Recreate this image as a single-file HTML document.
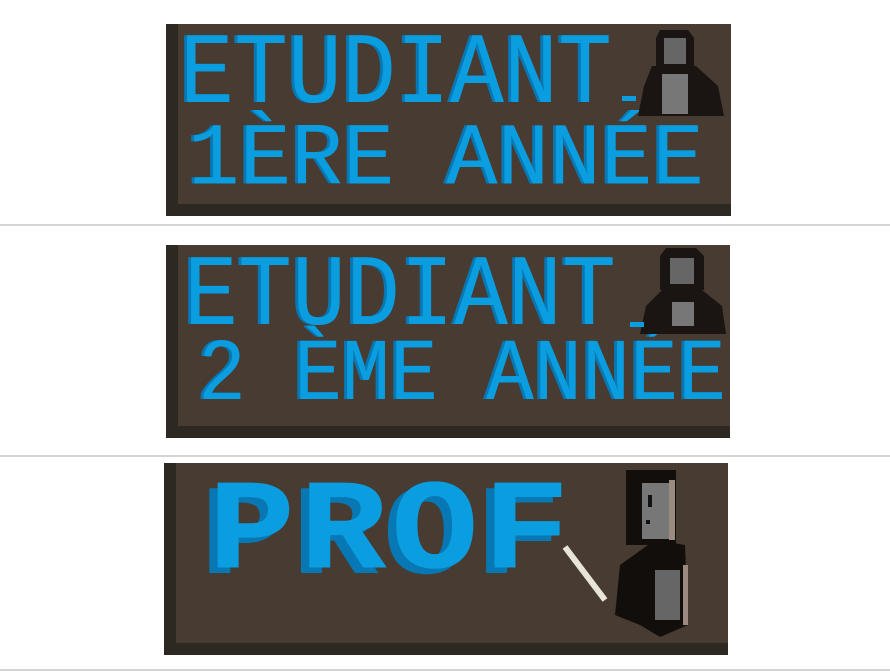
<!DOCTYPE html>
<html><head><meta charset="utf-8"><style>
body{margin:0;width:890px;height:672px;background:#fff;position:relative;overflow:hidden}
.hr{position:absolute;left:0;width:890px;height:2px;background:#d4d4d4}
.p{position:absolute;background:#2e2823}
.p .in{position:absolute;left:12px;top:0;right:0;bottom:12px;background:#473b32}
.t{position:absolute;font-family:"Liberation Mono",monospace;color:#0a9ee0;white-space:pre;line-height:1;transform-origin:0 0;text-shadow:-3px 0 #0778b4}
svg{position:absolute}
</style></head><body>
<div class="p" style="left:166px;top:24px;width:565px;height:192px"><div class="in"></div></div>
<div class="t" style="left:180px;top:26px;font-size:90px;transform:scale(1,1.12)">ETUDIANT</div>
<div class="t" style="left:188px;top:116px;font-size:86px;transform:scale(1,1.02)">1ÈRE ANNÉE</div>
<svg style="left:612px;top:26px" width="118" height="96" viewBox="0 0 118 96">
<path d="M48 4 H76 L82 12 V40 H44 V12 Z" fill="#1a1512"/><rect x="52" y="12" width="22" height="26" fill="#666"/>
<path d="M40 40 H84 L106 60 L112 90 H26 L32 60 Z" fill="#1a1512"/><rect x="50" y="48" width="26" height="40" fill="#777"/>
<rect x="10" y="70" width="14" height="5" fill="#0a9ee0"/></svg>
<div class="hr" style="top:224px"></div>

<div class="p" style="left:166px;top:245px;width:564px;height:193px"><div class="in"></div></div>
<div class="t" style="left:184px;top:248px;font-size:90px;transform:scale(1,1.12)">ETUDIANT</div>
<div class="t" style="left:198px;top:333px;font-size:80px;transform:scale(1,1.1)">2 ÈME ANNÉE</div>
<svg style="left:626px;top:246px" width="104" height="94" viewBox="0 0 104 94">
<path d="M40 2 H70 L78 10 V44 H34 V10 Z" fill="#1a1512"/><rect x="44" y="12" width="24" height="26" fill="#666"/>
<path d="M36 44 H76 L96 60 L100 88 H14 L20 60 Z" fill="#1a1512"/><rect x="46" y="56" width="22" height="24" fill="#777"/>
<rect x="4" y="76" width="14" height="5" fill="#0a9ee0"/></svg>
<div class="hr" style="top:455px"></div>

<div class="p" style="left:164px;top:463px;width:564px;height:192px"><div class="in"></div></div>
<div class="t" style="left:208px;top:470px;font-size:140px;font-weight:bold;letter-spacing:4px;transform:scale(1.04,0.92);text-shadow:-8px 6px #0778b4">PROF</div>
<svg style="left:560px;top:465px" width="140" height="175" viewBox="0 0 140 175">
<rect x="66" y="5" width="50" height="75" fill="#120e0c"/><rect x="82" y="18" width="30" height="56" fill="#777"/>
<rect x="109" y="15" width="6" height="60" fill="#9a8a80"/>
<rect x="88" y="30" width="4" height="12" fill="#111"/><rect x="86" y="55" width="4" height="4" fill="#111"/>
<path d="M60 100 L95 75 L125 80 L128 160 L100 172 L80 160 L55 150 Z" fill="#120e0c"/>
<rect x="95" y="105" width="25" height="50" fill="#666"/><rect x="123" y="100" width="5" height="60" fill="#9a8a80"/>
<path d="M5 82 L45 135" stroke="#e8e4d8" stroke-width="6"/></svg>
<div class="hr" style="top:669px"></div>
</body></html>
